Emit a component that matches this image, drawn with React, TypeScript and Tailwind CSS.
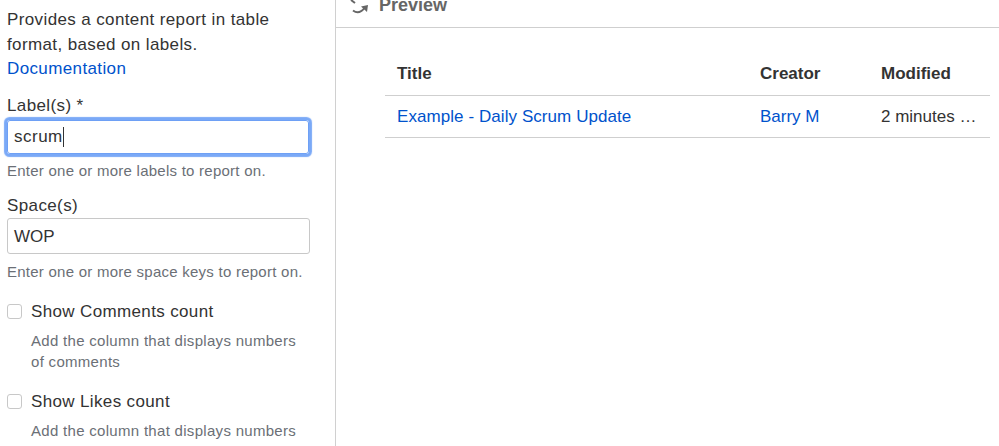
const FONT = "font-['Liberation_Sans',Arial,sans-serif]";

function Hint({ children }: { children: React.ReactNode }) {
  return <p className="text-[15px] leading-[21px] text-[#6b6f76] tracking-[0.25px] whitespace-nowrap">{children}</p>;
}

function Check({ label, lines }: { label: string; lines: string[] }) {
  return (
    <div className="flex gap-[9px]">
      <span className="mt-[4px] h-[15px] w-[15px] shrink-0 rounded-[3px] border border-[#c8c8c8] bg-white" />
      <div className="min-w-0">
        <div className="text-[17px] leading-[24px] text-[#333] tracking-[0.36px] whitespace-nowrap">{label}</div>
        <div className="mt-[6px] text-[15px] leading-[21px] text-[#6b6f76] tracking-[0.3px]">
          {lines.map((l) => (
            <div key={l} className="whitespace-nowrap">{l}</div>
          ))}
        </div>
      </div>
    </div>
  );
}

export default function App() {
  return (
    <div className={`${FONT} flex h-[446px] w-[999px] overflow-hidden bg-white text-[#333]`}>
      <aside className="h-full w-[336px] shrink-0 overflow-hidden border-r border-[#d0d0d0] pl-[7px] pr-[25px] pt-[8px]">
        <p className="whitespace-nowrap text-[17px] leading-[24.5px] tracking-[0.38px]">
          Provides a content report in table
          <br />
          format, based on labels.
          <br />
          <a className="text-[#0052cc]">Documentation</a>
        </p>
        <div className="mt-[12px] text-[17px] leading-[24px] tracking-[0.38px]">Label(s) *</div>
        <div className="mt-[2px] flex h-[34px] w-[302px] items-center rounded-[3px] border border-[#6ea0f5] pl-[6px] text-[17px] tracking-[0.5px] shadow-[0_0_1px_2.5px_#7aa9f7]">
          <span>scrum</span>
          <span className="h-[20px] w-px bg-[#333]" />
        </div>
        <div className="mt-[6px]"><Hint>Enter one or more labels to report on.</Hint></div>
        <div className="mt-[15px] text-[17px] leading-[20px] tracking-[0.38px]">Space(s)</div>
        <div className="mt-[2px] flex h-[36px] w-[303px] items-center rounded-[3px] border border-[#c8c8c8] pl-[6px] pt-[3px] text-[17px]">WOP</div>
        <div className="mt-[7px]"><Hint>Enter one or more space keys to report on.</Hint></div>
        <div className="mt-[18px]">
          <Check label="Show Comments count" lines={["Add the column that displays numbers", "of comments"]} />
        </div>
        <div className="mt-[18px]">
          <Check label="Show Likes count" lines={["Add the column that displays numbers"]} />
        </div>
      </aside>
      <main className="min-w-0 flex-1">
        <header className="flex h-[28px] items-start gap-[10px] border-b border-[#cfcfcf] pl-[13px]">
          <svg width="20" height="14" viewBox="0 0 20 14" fill="none" stroke="#666" strokeWidth="2" className="shrink-0">
            <path d="M2 0 L6 3" />
            <path d="M4 10.5 Q10 15 15.5 8" />
            <path d="M12 6.5 L19 5 L18 12 Z" fill="#666" stroke="none" />
          </svg>
          <span className="-mt-[5px] text-[18px] font-bold leading-[20px] text-[#666]">Preview</span>
        </header>
        <div className="pl-[49px] pr-[9px] pt-[25px]">
          <div className="grid grid-cols-[375px_121px_1fr] text-[17px]">
            <div className="flex h-[43px] items-center border-b border-[#cfcfcf] pl-[12px] font-bold">Title</div>
            <div className="flex h-[43px] items-center border-b border-[#cfcfcf] font-bold">Creator</div>
            <div className="flex h-[43px] items-center border-b border-[#cfcfcf] font-bold">Modified</div>
            <div className="flex h-[42px] items-center border-b border-[#cfcfcf] pl-[12px] tracking-[0.07px] text-[#0052cc]">Example - Daily Scrum Update</div>
            <div className="flex h-[42px] items-center border-b border-[#cfcfcf] text-[#0052cc]">Barry M</div>
            <div className="flex h-[42px] items-center border-b border-[#cfcfcf]">2 minutes …</div>
          </div>
        </div>
      </main>
    </div>
  );
}
